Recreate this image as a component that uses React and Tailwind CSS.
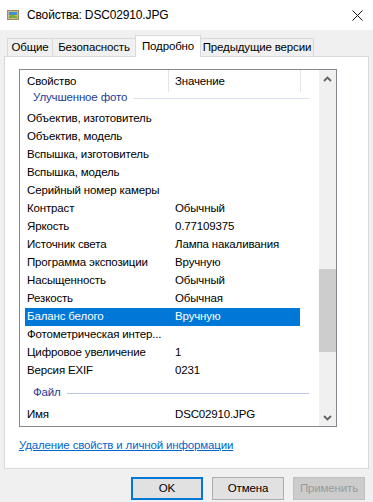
import React from 'react';

const rows = [
  ['Объектив, изготовитель', ''],
  ['Объектив, модель', ''],
  ['Вспышка, изготовитель', ''],
  ['Вспышка, модель', ''],
  ['Серийный номер камеры', ''],
  ['Контраст', 'Обычный'],
  ['Яркость', '0.77109375'],
  ['Источник света', 'Лампа накаливания'],
  ['Программа экспозиции', 'Вручную'],
  ['Насыщенность', 'Обычный'],
  ['Резкость', 'Обычная'],
  ['Баланс белого', 'Вручную', true],
  ['Фотометрическая интер...', ''],
  ['Цифровое увеличение', '1'],
  ['Версия EXIF', '0231'],
];

function Chevron({ up }) {
  return (
    <svg width="9" height="6" viewBox="0 0 9 6">
      <polyline
        points={up ? '1,5 4.5,1.5 8,5' : '1,1 4.5,4.5 8,1'}
        fill="none"
        stroke="#606060"
        strokeWidth="1.8"
      />
    </svg>
  );
}

function Row({ name, value, selected }) {
  return (
    <div className={`ml-[5px] w-[275px] h-[18px] flex items-center whitespace-nowrap shrink-0 ${selected ? 'bg-[#0078d7] text-white' : ''}`}>
      <span className="pl-[2px] w-[150px] shrink-0">{name}</span>
      <span>{value}</span>
    </div>
  );
}

export default function App() {
  return (
    <div className="w-[373px] h-[502px] bg-[#f0f0f0] flex flex-col font-['Liberation_Sans',Arial,sans-serif] text-[11.5px] tracking-[-0.15px] text-black overflow-hidden whitespace-nowrap">
      {/* Title bar */}
      <div className="h-[30px] bg-white flex items-center shrink-0">
        <svg className="ml-[7px]" width="12" height="10" viewBox="0 0 12 10">
          <rect x="0.5" y="0.5" width="11" height="9" fill="#cbb88e" stroke="#9c8a64" />
          <rect x="2" y="2" width="8" height="6" fill="#3d8fd6" />
          <rect x="2" y="5" width="8" height="3" fill="#e2c23a" />
          <path d="M2 6 L5 4.5 L10 6.5 L10 8 L2 8 Z" fill="#6fae3e" />
        </svg>
        <span className="ml-[8px] text-[12px]">Свойства: DSC02910.JPG</span>
        <svg className="ml-auto mr-[10px]" width="11" height="11" viewBox="0 0 11 11">
          <path d="M0.5 0.5 L10.5 10.5 M10.5 0.5 L0.5 10.5" stroke="#111" strokeWidth="1" />
        </svg>
      </div>

      {/* Tabs */}
      <div className="h-[27px] flex items-end pl-[7px] shrink-0">
        <div className="w-[46px] h-[19px] border border-b-0 border-[#d9d9d9] flex items-center justify-center">Общие</div>
        <div className="-ml-px w-[84px] h-[19px] border border-b-0 border-[#d9d9d9] flex items-center justify-center">Безопасность</div>
        <div className="-ml-px w-[66px] h-[22px] border border-b-0 border-[#d9d9d9] bg-white relative z-10 flex items-start pt-[2px] justify-center">Подробно</div>
        <div className="-ml-px w-[114px] h-[19px] border border-b-0 border-[#d9d9d9] flex items-center justify-center">Предыдущие версии</div>
      </div>

      {/* Panel */}
      <div className="-mt-px mx-[4px] h-[413px] border border-[#d9d9d9] bg-white shrink-0">
        <div className="ml-[14px] mt-[12px] w-[318px] h-[358px] border border-[#828790] flex">
          <div className="w-[299px] flex flex-col overflow-hidden">
            {/* header */}
            <div className="h-[22px] flex shrink-0 bg-white">
              <div className="w-[149px] pl-[7px] pt-[2px] flex items-center border-r border-[#e5e5e5]">Свойство</div>
              <div className="w-[132px] pl-[6px] pt-[2px] flex items-center border-r border-[#e5e5e5]">Значение</div>
            </div>
            {/* group (scrolled) */}
            <div className="h-[18px] overflow-hidden shrink-0">
              <div className="h-[24px] -mt-[6px] flex items-center pl-[13px] text-[#1e3c96]">
                <span>Улучшенное фото</span>
                <div className="flex-1 h-px bg-[#dbe2f2] ml-[6px] mr-[10px]" />
              </div>
            </div>
            {rows.map(([n, v, s]) => (
              <Row key={n} name={n} value={v} selected={s} />
            ))}
            <div className="h-[26px] flex items-center pl-[13px] text-[#1e3c96] shrink-0">
              <span>Файл</span>
              <div className="flex-1 h-px bg-[#b9c7e6] ml-[6px] mr-[10px]" />
            </div>
            <Row name="Имя" value="DSC02910.JPG" />
          </div>
          {/* scrollbar */}
          <div className="w-[17px] bg-[#f0f0f0] flex flex-col">
            <div className="h-[17px] flex items-center justify-center shrink-0">
              <Chevron up />
            </div>
            <div className="flex-1">
              <div className="mt-[182px] h-[83px] bg-[#cdcdcd]" />
            </div>
            <div className="h-[17px] flex items-center justify-center shrink-0">
              <Chevron />
            </div>
          </div>
        </div>
        <div className="ml-[14px] mt-[10px] text-[#0066cc] underline leading-[16px]">
          Удаление свойств и личной информации
        </div>
      </div>

      {/* Buttons */}
      <div className="flex justify-end gap-[9px] pr-[8px] mt-[8px]">
        <button className="w-[72px] h-[23px] border-2 border-[#0078d7] bg-[#e1e1e1] flex items-center justify-center">OK</button>
        <button className="w-[72px] h-[23px] border border-[#adadad] bg-[#e1e1e1] flex items-center justify-center">Отмена</button>
        <button className="w-[72px] h-[23px] border border-[#bfbfbf] bg-[#cccccc] text-[#9a9a9a] flex items-center justify-center">Применить</button>
      </div>
    </div>
  );
}
